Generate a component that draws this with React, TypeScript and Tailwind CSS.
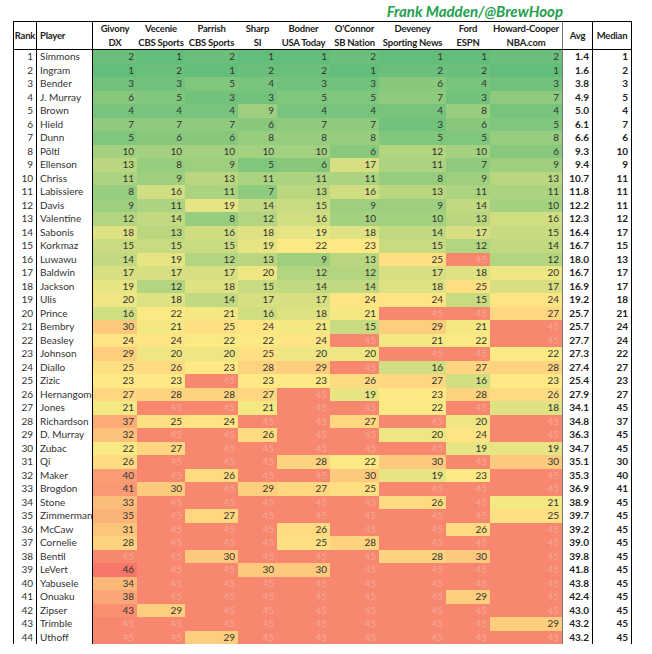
import type { CSSProperties } from "react";

type Row = [string, number[], number, number];

const rows: Row[] = [
  ["Simmons", [2, 1, 2, 1, 1, 2, 1, 1, 2], 1.4, 1],
  ["Ingram", [1, 2, 1, 2, 2, 1, 2, 2, 1], 1.6, 2],
  ["Bender", [3, 3, 5, 4, 3, 3, 6, 4, 3], 3.8, 3],
  ["J. Murray", [6, 5, 3, 3, 5, 5, 7, 3, 7], 4.9, 5],
  ["Brown", [4, 4, 4, 9, 4, 4, 4, 8, 4], 5.0, 4],
  ["Hield", [7, 7, 7, 6, 7, 7, 3, 6, 5], 6.1, 7],
  ["Dunn", [5, 6, 6, 8, 8, 8, 5, 5, 8], 6.6, 6],
  ["Pöltl", [10, 10, 10, 10, 10, 6, 12, 10, 6], 9.3, 10],
  ["Ellenson", [13, 8, 9, 5, 6, 17, 11, 7, 9], 9.4, 9],
  ["Chriss", [11, 9, 13, 11, 11, 11, 8, 9, 13], 10.7, 11],
  ["Labissiere", [8, 16, 11, 7, 13, 16, 13, 11, 11], 11.8, 11],
  ["Davis", [9, 11, 19, 14, 15, 9, 9, 14, 10], 12.2, 11],
  ["Valentine", [12, 14, 8, 12, 16, 10, 10, 13, 16], 12.3, 12],
  ["Sabonis", [18, 13, 16, 18, 19, 18, 14, 17, 15], 16.4, 17],
  ["Korkmaz", [15, 15, 15, 19, 22, 23, 15, 12, 14], 16.7, 15],
  ["Luwawu", [14, 19, 12, 13, 9, 13, 25, 45, 12], 18.0, 13],
  ["Baldwin", [17, 17, 17, 20, 12, 12, 17, 18, 20], 16.7, 17],
  ["Jackson", [19, 12, 18, 15, 14, 14, 18, 25, 17], 16.9, 17],
  ["Ulis", [20, 18, 14, 17, 17, 24, 24, 15, 24], 19.2, 18],
  ["Prince", [16, 22, 21, 16, 18, 21, 45, 45, 27], 25.7, 21],
  ["Bembry", [30, 21, 25, 24, 21, 15, 29, 21, 45], 25.7, 24],
  ["Beasley", [24, 24, 22, 22, 24, 45, 21, 22, 45], 27.7, 24],
  ["Johnson", [29, 20, 20, 25, 20, 20, 45, 45, 22], 27.3, 22],
  ["Diallo", [25, 26, 23, 28, 29, 45, 16, 27, 28], 27.4, 27],
  ["Zizic", [23, 23, 45, 23, 23, 26, 27, 16, 23], 25.4, 23],
  ["Hernangomez", [27, 28, 28, 27, 45, 19, 23, 28, 26], 27.9, 27],
  ["Jones", [21, 45, 45, 21, 45, 45, 22, 45, 18], 34.1, 45],
  ["Richardson", [37, 25, 24, 45, 45, 27, 45, 20, 45], 34.8, 37],
  ["D. Murray", [32, 45, 45, 26, 45, 45, 20, 24, 45], 36.3, 45],
  ["Zubac", [22, 27, 45, 45, 45, 45, 45, 19, 19], 34.7, 45],
  ["Qi", [26, 45, 45, 45, 28, 22, 30, 45, 30], 35.1, 30],
  ["Maker", [40, 45, 26, 45, 45, 30, 19, 23, 45], 35.3, 40],
  ["Brogdon", [41, 30, 45, 29, 27, 25, 45, 45, 45], 36.9, 41],
  ["Stone", [33, 45, 45, 45, 45, 45, 26, 45, 21], 38.9, 45],
  ["Zimmerman", [35, 45, 27, 45, 45, 45, 45, 45, 25], 39.7, 45],
  ["McCaw", [31, 45, 45, 45, 26, 45, 45, 26, 45], 39.2, 45],
  ["Cornelie", [28, 45, 45, 45, 25, 28, 45, 45, 45], 39.0, 45],
  ["Bentil", [45, 45, 30, 45, 45, 45, 28, 30, 45], 39.8, 45],
  ["LeVert", [46, 45, 45, 30, 30, 45, 45, 45, 45], 41.8, 45],
  ["Yabusele", [34, 45, 45, 45, 45, 45, 45, 45, 45], 43.8, 45],
  ["Onuaku", [38, 45, 45, 45, 45, 45, 45, 29, 45], 42.4, 45],
  ["Zipser", [43, 29, 45, 45, 45, 45, 45, 45, 45], 43.0, 45],
  ["Trimble", [45, 45, 45, 45, 45, 45, 45, 45, 29], 43.2, 45],
  ["Uthoff", [45, 45, 29, 45, 45, 45, 45, 45, 45], 43.2, 45],
];

const rankers = [
  ["Givony", "DX"],
  ["Vecenie", "CBS Sports"],
  ["Parrish", "CBS Sports"],
  ["Sharp", "SI"],
  ["Bodner", "USA Today"],
  ["O'Connor", "SB Nation"],
  ["Deveney", "Sporting News"],
  ["Ford", "ESPN"],
  ["Howard-Cooper", "NBA.com"],
];

// colour scale stops: value, r, g, b
const stops = [
  [1, 99, 190, 123],
  [22.5, 255, 235, 132],
  [45, 248, 135, 111],
  [46, 247, 118, 106],
];

function scaleColor(v: number) {
  for (let i = 0; i < stops.length - 1; i++) {
    const a = stops[i];
    const b = stops[i + 1];
    if (v <= b[0]) {
      const t = Math.max(0, (v - a[0]) / (b[0] - a[0]));
      const c = [1, 2, 3].map((k) => Math.round(a[k] + (b[k] - a[k]) * t));
      return `rgb(${c[0]}, ${c[1]}, ${c[2]})`;
    }
  }
  return "rgb(247, 118, 106)";
}

const grid =
  "grid grid-cols-[24px_56px_44px_48px_53px_39px_53px_49px_67px_44px_73px_30px_39px]";

export default function App() {
  return (
    <div
      className="w-[652px] h-[654px] overflow-hidden bg-white text-[10px] text-[#333]"
      style={{ fontFamily: "Lato, 'Open Sans', sans-serif" } as CSSProperties}
    >
      <div className="ml-[13px] w-[619px] h-[21px] flex justify-end items-end pr-[69px]">
        <span className="text-[15px] leading-[20px] font-bold italic text-[#23a04c]">
          Frank Madden/@BrewHoop
        </span>
      </div>

      <div className="ml-[13px] w-[619px]">
        <div className={`${grid} h-[29px] border-t border-b border-black font-bold text-[#222] text-[9.5px] leading-[13.5px] tracking-[-0.2px]`}>
          <div className="border-l border-r border-black flex items-center justify-center">Rank</div>
          <div className="border-r border-black flex items-center pl-[3px]">Player</div>
          {rankers.map(([name, outlet], i) => (
            <div
              key={name}
              className={`flex flex-col items-center justify-center whitespace-nowrap ${
                i === rankers.length - 1 ? "border-r border-[#777]" : ""
              }`}
            >
              <span>{name}</span>
              <span>{outlet}</span>
            </div>
          ))}
          <div className="border-r border-black flex items-center justify-center">Avg</div>
          <div className="border-r border-black flex items-center justify-center">Median</div>
        </div>

        {rows.map(([name, picks, avg, median], r) => (
          <div key={name} className={`${grid} h-[13.5px] leading-[13.5px]`}>
            <div className="border-l border-r border-black text-right pr-[3px]">{r + 1}</div>
            <div className="border-r border-black pl-[3px] whitespace-nowrap overflow-hidden">{name}</div>
            {picks.map((v, i) => (
              <div
                key={i}
                className={`text-right pr-[3px] ${v === 45 ? "text-[#f3a999]" : ""} ${
                  i === picks.length - 1 ? "border-r border-[#777]" : ""
                }`}
                style={{ backgroundColor: scaleColor(v) }}
              >
                {v}
              </div>
            ))}
            <div className="border-r border-black text-right pr-[3px] font-bold text-[#222]">
              {avg.toFixed(1)}
            </div>
            <div className="border-r border-black text-right pr-[3px] font-bold text-[#222]">
              {median}
            </div>
          </div>
        ))}
      </div>
    </div>
  );
}
